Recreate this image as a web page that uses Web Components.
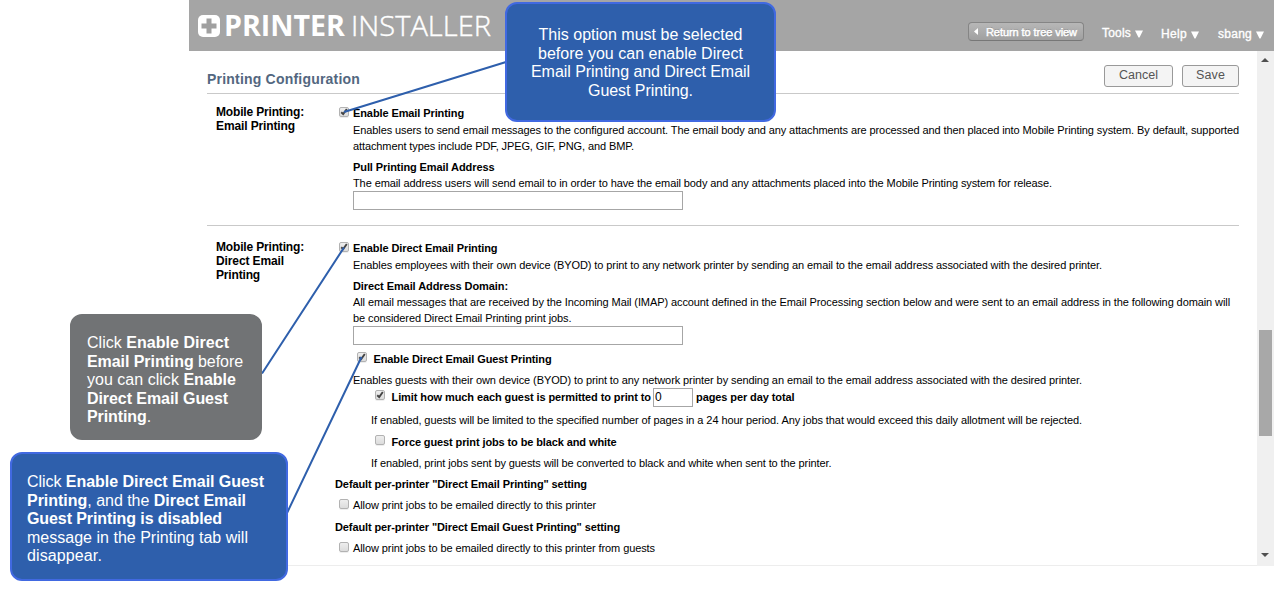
<!DOCTYPE html>
<html lang="en">
<head>
<meta charset="utf-8">
<title>Printer Installer</title>
<style>
html,body{margin:0;height:592px;overflow:hidden;background:#fff}
body{position:relative;font-family:"Liberation Sans",Arial,sans-serif}
</style>
</head>
<body>
<app-window></app-window>
<call-lines></call-lines>
<call-out style="left:505px;top:2px;width:271px;height:120px;--top:22px;--pad:0px;--align:center">
  <fit-text w="204">This option must be selected</fit-text>
  <fit-text w="205">before you can enable Direct</fit-text>
  <fit-text w="219">Email Printing and Direct Email</fit-text>
  <fit-text w="105">Guest Printing.</fit-text>
</call-out>
<call-out style="left:70px;top:314px;width:192px;height:126px;--bg:#717375;--edge:#717375;--top:18px">
  <fit-text w="142">Click <b>Enable Direct</b></fit-text>
  <fit-text w="156"><b>Email Printing</b> before</fit-text>
  <fit-text w="149">you can click <b>Enable</b></fit-text>
  <fit-text w="141"><b>Direct Email Guest</b></fit-text>
  <fit-text w="64"><b>Printing</b>.</fit-text>
</call-out>
<call-out style="left:10px;top:452px;width:278px;height:129px;--top:19px">
  <fit-text w="237">Click <b>Enable Direct Email Guest</b></fit-text>
  <fit-text w="219"><b>Printing</b>, and the <b>Direct Email</b></fit-text>
  <fit-text w="195"><b>Guest Printing is disabled</b></fit-text>
  <fit-text w="221">message in the Printing tab will</fit-text>
  <fit-text w="75">disappear.</fit-text>
</call-out>

<script>
const component = (name, html, setup) => customElements.define(name, class extends HTMLElement {
  constructor() {
    super();
    const t = document.createElement('template');
    t.innerHTML = html;
    this.attachShadow({mode: 'open'}).append(t.content.cloneNode(true));
  }
  connectedCallback() { if (setup) setup(this, this.shadowRoot); }
});

component('call-out', `<style>
:host{position:absolute;z-index:3;box-sizing:border-box;border:2px solid var(--edge,#4169e1);border-radius:12px;background:var(--bg,#2e5fac);color:#fff;font-size:16px;line-height:18.5px}
div{display:flex;flex-direction:column;align-items:var(--align,flex-start);padding:var(--top) 0 0 var(--pad,15px)}
</style><div><slot></slot></div>`);

component('call-lines', `<style>:host{position:absolute;inset:0;z-index:2;pointer-events:none}svg{display:block}</style>
<svg width="1275" height="592" fill="none" stroke="#2e5fac" stroke-width="2"><path d="M506 62L344 112M262 373.500L344 247.500M287 513L361.500 357"/></svg>`);

component('check-box', `<style>
:host{display:block;flex:none;box-sizing:border-box;width:10px;height:10px;border:1px solid #b2b2b2;border-radius:2px;background:linear-gradient(#eee,#dcdcdc);box-shadow:0 1px 0 #0001}
svg{display:none;overflow:visible}:host([checked]) svg{display:block}
</style><svg width="8" height="8" fill="none" stroke="#444" stroke-width="1.900"><path d="M1.200 4.200L3.200 6L6.800 1"/></svg>`);

component('text-box', `<style>
:host{display:block;flex:none;box-sizing:border-box;width:330px;height:19px;border:1px solid #a6a6a6;background:#fff;font-size:12px;line-height:17px;padding-left:1px;font-weight:400}
</style><slot></slot>`);

component('check-row', `<style>
:host{display:flex;height:16px;align-items:flex-start}
check-box{margin:var(--cy,2px) var(--gap,4px) 0 4px}
</style><check-box></check-box><slot></slot>`, (el, root) => {
  if (el.hasAttribute('checked')) root.querySelector('check-box').setAttribute('checked', '');
});

component('form-section', `<style>
:host{display:grid;grid-template-columns:119px 1fr;padding-left:9px}
.label{font-size:12px;font-weight:700;line-height:14px}
</style><div class="label"><slot name="label"></slot></div><div><slot></slot></div>`);

component('push-button', `<style>
:host{display:flex;box-sizing:border-box;height:22px;border:1px solid #999;border-radius:3px;background:#f4f4f4;justify-content:center;font-size:12.5px;line-height:18px;color:#555}
</style><slot></slot>`);

component('menu-item', `<style>
:host{display:flex;height:16px;gap:4px;align-items:center;font-size:12px;line-height:16px;color:#fff;-webkit-text-stroke:.35px #fff}
svg{margin-top:2px}
</style><slot></slot><svg width="8" height="8" fill="#fff"><path d="M0 .5H8L4.500 7.500H3.500Z"/></svg>`);

component('scroll-bar', `<style>
:host{display:flex;flex-direction:column;align-items:center;width:17px;background:#f0f0f0}
svg{display:block;margin-left:-1px}
.up{margin-top:7px}
.thumb{width:13px;height:106px;margin:268px 2px 117px;background:#a8a8a8}
</style><svg class="up" width="8" height="4" fill="#505050"><path d="M0 4L4 0L8 4Z"/></svg>
<div class="thumb"></div><svg width="8" height="4" fill="#505050"><path d="M0 0H8L4 4Z"/></svg>`);

component('app-header', `<style>
:host{display:flex;height:51px;background:#a5a5a5;color:#fff;box-sizing:border-box;padding-left:9px;align-items:flex-start}
.plus{margin-top:15px;width:22px;height:22px}
.logo{display:flex;font-family:"Open Sans",sans-serif;font-size:28px;line-height:38px;margin:6px 0 0 4px;gap:6px}
.back{display:flex;box-sizing:border-box;width:116px;height:19px;margin:22px 0 0 477px;border:1px solid #858585;border-bottom-color:#777;border-radius:4px;background:linear-gradient(#b7b7b7,#a0a0a0);font-size:11px;line-height:18px;padding-left:5px;gap:8px;-webkit-text-stroke:.45px #fff;text-shadow:0 -1px 0 #888}
.back svg{margin-top:5px}
.tools{margin:25px 0 0 18px}.help{margin:26px 0 0 18px}.user{margin:26px 0 0 19px}
</style>
<svg class="plus" viewBox="0 0 22 22"><rect width="22" height="22" rx="5" fill="#fff"/><path d="M8.500 3.500H13.500V8.500H18.500V13.500H13.500V18.500H8.500V13.500H3.500V8.500H8.500Z" fill="#a0a0a0"/></svg>
<div class="logo"><fit-text w="121" mode="scale"><b>PRINTER</b></fit-text><fit-text w="140" mode="scale"><span style="font-weight:300;-webkit-text-stroke:.4px #fff">INSTALLER</span></fit-text></div>
<div class="back"><svg width="4" height="7" fill="#fff"><path d="M4 0V7L0 3.500Z"/></svg><fit-text w="91">Return to tree view</fit-text></div>
<menu-item class="tools"><fit-text w="29">Tools</fit-text></menu-item>
<menu-item class="help"><fit-text w="26">Help</fit-text></menu-item>
<menu-item class="user"><fit-text w="34">sbang</fit-text></menu-item>`);

component('config-page', `<style>
:host{display:block;padding:0 18px;font-size:11px;line-height:16px;color:#000;background:#fff;border-bottom:1px solid #ededed;box-sizing:border-box}
.top{display:flex;height:42px;border-bottom:1px solid #c9c9c9;align-items:flex-start}
h1{font-size:14px;line-height:18px;color:#536780;margin:19px auto 0 0}
push-button{margin-top:14px}
.i{margin-left:18px}
fit-text{height:16px}.label-line{height:14px}
form-section>b{display:block}
</style>
<div class="top"><h1><fit-text w="153">Printing Configuration</fit-text></h1>
<push-button style="width:69px"><fit-text w="39">Cancel</fit-text></push-button>
<push-button style="width:57px;margin-left:9px"><fit-text w="29">Save</fit-text></push-button></div>
<form-section style="padding-top:11px;height:120px;border-bottom:1px solid #c9c9c9">
  <div slot="label"><fit-text class="label-line" w="88">Mobile Printing:</fit-text><fit-text class="label-line" w="79">Email Printing</fit-text></div>
  <check-row checked><fit-text w="111"><b>Enable Email Printing</b></fit-text></check-row>
  <div class="i" style="margin-top:1px"><fit-text w="886">Enables users to send email messages to the configured account. The email body and any attachments are processed and then placed into Mobile Printing system. By default, supported</fit-text>
  <fit-text w="281">attachment types include PDF, JPEG, GIF, PNG, and BMP.</fit-text>
  <fit-text w="141.5" style="margin-top:5px"><b>Pull Printing Email Address</b></fit-text>
  <fit-text w="699">The email address users will send email to in order to have the email body and any attachments placed into the Mobile Printing system for release.</fit-text>
  <text-box></text-box></div>
</form-section>
<form-section style="padding-top:14px">
  <div slot="label"><fit-text class="label-line" w="88">Mobile Printing:</fit-text><fit-text class="label-line" w="68">Direct Email</fit-text><fit-text class="label-line" w="44">Printing</fit-text></div>
  <check-row checked><fit-text w="144.5"><b>Enable Direct Email Printing</b></fit-text></check-row>
  <div class="i" style="margin-top:1px"><fit-text w="749">Enables employees with their own device (BYOD) to print to any network printer by sending an email to the email address associated with the desired printer.</fit-text>
  <fit-text w="155" style="margin-top:5px"><b>Direct Email Address Domain:</b></fit-text>
  <fit-text w="877">All email messages that are received by the Incoming Mail (IMAP) account defined in the Email Processing section below and were sent to an email address in the following domain will</fit-text>
  <fit-text w="218.5">be considered Direct Email Printing print jobs.</fit-text>
  <text-box></text-box>
  <check-row checked style="margin-top:6px;--cy:1px;--gap:6.500px"><fit-text w="178"><b>Enable Direct Email Guest Printing</b></fit-text></check-row>
  <fit-text w="729" style="margin-top:5px">Enables guests with their own device (BYOD) to print to any network printer by sending an email to the email address associated with the desired printer.</fit-text></div>
  <div style="margin-left:36px">
  <check-row checked style="margin-top:1px;--cy:1px;--gap:6.500px"><fit-text w="259.5"><b>Limit how much each guest is permitted to print to</b></fit-text><text-box style="width:40px;margin:-1px 3px 0 2px">0</text-box><fit-text w="98.5"><b>pages per day total</b></fit-text></check-row>
  <fit-text w="711" style="margin-top:7px">If enabled, guests will be limited to the specified number of pages in a 24 hour period. Any jobs that would exceed this daily allotment will be rejected.</fit-text>
  <check-row style="margin-top:6px;--cy:1px;--gap:6.500px"><fit-text w="225"><b>Force guest print jobs to be black and white</b></fit-text></check-row>
  <fit-text w="460.5" style="margin-top:5px">If enabled, print jobs sent by guests will be converted to black and white when sent to the printer.</fit-text></div>
  <fit-text w="252" style="margin-top:5px"><b>Default per-printer "Direct Email Printing" setting</b></fit-text>
  <check-row style="margin-top:5px"><fit-text w="243">Allow print jobs to be emailed directly to this printer</fit-text></check-row>
  <fit-text w="285" style="margin-top:6px"><b>Default per-printer "Direct Email Guest Printing" setting</b></fit-text>
  <check-row style="margin-top:5px"><fit-text w="302">Allow print jobs to be emailed directly to this printer from guests</fit-text></check-row>
</form-section>`);

component('app-window', `<style>
:host{display:grid;grid-template:51px 515px / 1fr 17px;margin-left:189px;width:1085px}
app-header{grid-column:1/3}
</style><app-header></app-header><config-page></config-page><scroll-bar></scroll-bar>`);

/* Text line set to an exact measure: tracked by default, or scaled for the wordmark. */
component('fit-text', `<style>
:host{display:block;white-space:nowrap}
span{display:inline-block;transform-origin:0 50%}
</style><span><slot></slot></span>`, (el, root) => {
  const span = root.querySelector('span');
  const want = +el.getAttribute('w');
  el.style.width = want + 'px';
  const have = span.getBoundingClientRect().width;
  if (el.getAttribute('mode') === 'scale') span.style.transform = `scaleX(${want / have})`;
  else span.style.letterSpacing = (want - have) / el.textContent.length + 'px';
});
</script>
</body>
</html>
